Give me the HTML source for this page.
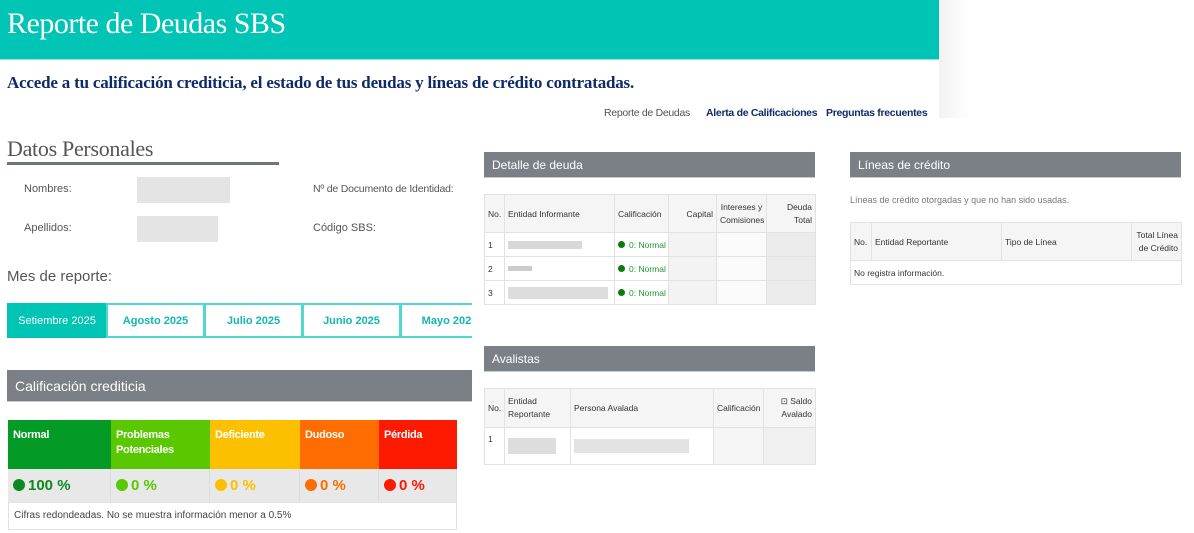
<!DOCTYPE html>
<html><head><meta charset="utf-8"><style>
*{margin:0;padding:0;box-sizing:border-box}
body{width:1194px;height:533px;background:#fff;position:relative;overflow:hidden;font-family:"Liberation Sans",sans-serif;}
.a{position:absolute}
.serif{font-family:"Liberation Serif",serif}
.bar{background:#7b8087;color:#fff;font-size:12px;padding-left:8px;display:flex;align-items:center;border-bottom:1px solid #c8cacc}
table{border-collapse:collapse;position:absolute;font-size:8.5px;color:#333;table-layout:fixed}
td,th{border:1px solid #e2e2e2;font-weight:normal;padding:0 3px;vertical-align:middle;white-space:nowrap;overflow:hidden}
th{background:#f5f5f5}
th.w{white-space:normal;line-height:13px}
.ok{color:#1a9a2a}
.dot{display:inline-block;width:7px;height:7px;border-radius:50%;background:#0c7a0c;margin-right:4px;vertical-align:-0.5px}
.tab{position:absolute;top:0;height:35px;border:2px solid #4fd8d0;color:#13b7ae;font-weight:bold;font-size:11px;display:flex;align-items:center;justify-content:center}
.cc{position:absolute;top:420px;height:49px;color:#fff;font-weight:bold;font-size:11px;padding:8px 5px;line-height:15px;letter-spacing:-0.3px}
.pc{position:absolute;top:469px;height:33px;background:#e8e8e8;font-size:15px;font-weight:bold;padding:8px 5px;border-right:1px solid #ddd}
.pc i{display:inline-block;width:12px;height:12px;border-radius:50%;margin-right:3px;vertical-align:-1px}
</style></head><body>
<div class="a" style="left:0;top:0;width:939px;height:60px;background:#00c4b4;border-bottom:1px solid #8ee6de"></div>
<div class="a serif" style="left:7px;top:7px;font-size:30px;color:#fff;letter-spacing:-0.5px">Reporte de Deudas SBS</div>
<div class="a" style="left:939px;top:0;width:30px;height:118px;background:linear-gradient(90deg,#f2f2f2,#fff)"></div>
<div class="a serif" style="left:7px;top:73px;font-size:17px;font-weight:bold;color:#0f2a6b;letter-spacing:-0.2px">Accede a tu calificación crediticia, el estado de tus deudas y líneas de crédito contratadas.</div>
<div class="a" style="left:0;top:106px;width:939px;height:12px;overflow:hidden;font-size:10.5px;white-space:nowrap;letter-spacing:-0.3px">
<span class="a" style="left:604px;top:1px;color:#555">Reporte de Deudas</span>
<span class="a" style="left:706px;top:1px;color:#0f2a6b;font-weight:bold">Alerta de Calificaciones</span>
<span class="a" style="left:826px;top:1px;color:#0f2a6b;font-weight:bold">Preguntas frecuentes</span></div>

<div class="a serif" style="left:7px;top:136px;font-size:22px;color:#555;letter-spacing:-0.3px">Datos Personales</div>
<div class="a" style="left:7px;top:162px;width:272px;height:3px;background:#6e747b"></div>
<div class="a" style="left:24px;top:183px;font-size:11px;color:#555">Nombres:</div>
<div class="a" style="left:24px;top:222px;font-size:11px;color:#555">Apellidos:</div>
<div class="a" style="left:313px;top:183px;font-size:10.5px;color:#555;letter-spacing:-0.2px">Nº de Documento de Identidad:</div>
<div class="a" style="left:313px;top:222px;font-size:11px;color:#555">Código SBS:</div>
<div class="a" style="left:137px;top:177px;width:93px;height:26px;background:#e4e4e4"></div>
<div class="a" style="left:137px;top:216px;width:81px;height:26px;background:#e4e4e4"></div>
<div class="a" style="left:7px;top:268px;font-size:15px;color:#555">Mes de reporte:</div>
<div class="a" style="left:7px;top:303px;width:465px;height:36px;overflow:hidden">
<div class="tab" style="left:0;width:100px;background:#00c4b4;color:#fff;font-weight:normal;border-color:#00c4b4">Setiembre 2025</div>
<div class="tab" style="left:99px;width:99px">Agosto 2025</div>
<div class="tab" style="left:197px;width:99px">Julio 2025</div>
<div class="tab" style="left:295px;width:99px">Junio 2025</div>
<div class="tab" style="left:393px;width:99px">Mayo 2025</div></div>
<div class="a bar" style="left:7px;top:370px;width:465px;height:32px;font-size:14px">Calificación crediticia</div>
<div class="cc" style="left:8px;width:103px;background:#039b26">Normal</div>
<div class="cc" style="left:111px;width:99px;background:#5ac800">Problemas Potenciales</div>
<div class="cc" style="left:210px;width:90px;background:#fdc000">Deficiente</div>
<div class="cc" style="left:300px;width:79px;background:#ff6c00">Dudoso</div>
<div class="cc" style="left:379px;width:78px;background:#fc1a00">Pérdida</div>
<div class="pc" style="left:8px;width:103px;color:#0c8a22"><i style="background:#0c8a22"></i>100 %</div>
<div class="pc" style="left:111px;width:99px;color:#5ac800"><i style="background:#5ac800"></i>0 %</div>
<div class="pc" style="left:210px;width:90px;color:#fdc000"><i style="background:#fdc000"></i>0 %</div>
<div class="pc" style="left:300px;width:79px;color:#ff6c00"><i style="background:#ff6c00"></i>0 %</div>
<div class="pc" style="left:379px;width:78px;color:#fc1a00"><i style="background:#fc1a00"></i>0 %</div>
<div class="a" style="left:8px;top:502px;width:449px;height:28px;border:1px solid #e2e2e2;font-size:10px;color:#444;padding:7px 5px">Cifras redondeadas. No se muestra información menor a 0.5%</div>

<div class="a bar" style="left:484px;top:152px;width:331px;height:26px">Detalle de deuda</div>
<table style="left:484px;top:194px;width:331px">
<colgroup><col style="width:20px"><col style="width:110px"><col style="width:54px"><col style="width:48px"><col style="width:50px"><col style="width:49px"></colgroup>
<tr style="height:38px"><th style="text-align:left">No.</th><th style="text-align:left">Entidad Informante</th><th style="text-align:left">Calificación</th><th style="text-align:right">Capital</th><th class="w" style="text-align:center">Intereses y Comisiones</th><th class="w" style="text-align:right">Deuda Total</th></tr>
<tr style="height:24px"><td>1</td><td><div style="width:74px;height:8px;background:#d8d8d8"></div></td><td class="ok"><span class="dot"></span>0: Normal</td><td style="background:#f3f3f3"></td><td style="background:#fafafa"></td><td style="background:#ebebeb"></td></tr>
<tr style="height:24px"><td>2</td><td><div style="width:24px;height:5px;background:#ccc"></div></td><td class="ok"><span class="dot"></span>0: Normal</td><td style="background:#f3f3f3"></td><td style="background:#fafafa"></td><td style="background:#ebebeb"></td></tr>
<tr style="height:24px"><td>3</td><td><div style="width:100px;height:12px;background:#ddd"></div></td><td class="ok"><span class="dot"></span>0: Normal</td><td style="background:#f3f3f3"></td><td style="background:#fafafa"></td><td style="background:#ebebeb"></td></tr>
</table>
<div class="a bar" style="left:484px;top:346px;width:331px;height:26px">Avalistas</div>
<table style="left:484px;top:388px;width:331px">
<colgroup><col style="width:20px"><col style="width:66px"><col style="width:143px"><col style="width:50px"><col style="width:52px"></colgroup>
<tr style="height:39px"><th style="text-align:left">No.</th><th class="w" style="text-align:left">Entidad Reportante</th><th style="text-align:left">Persona Avalada</th><th>Calificación</th><th class="w" style="text-align:right">⊡ Saldo Avalado</th></tr>
<tr style="height:37px"><td style="vertical-align:top;padding-top:6px">1</td><td><div style="width:48px;height:16px;background:#ddd"></div></td><td><div style="width:115px;height:14px;background:#e3e3e3"></div></td><td style="background:#f6f6f6"></td><td style="background:#f0f0f0"></td></tr>
</table>

<div class="a bar" style="left:850px;top:152px;width:331px;height:26px">Líneas de crédito</div>
<div class="a" style="left:850px;top:195px;font-size:9px;color:#777">Líneas de crédito otorgadas y que no han sido usadas.</div>
<table style="left:850px;top:222px;width:331px">
<colgroup><col style="width:21px"><col style="width:130px"><col style="width:130px"><col style="width:50px"></colgroup>
<tr style="height:38px"><th style="text-align:left">No.</th><th style="text-align:left">Entidad Reportante</th><th style="text-align:left">Tipo de Línea</th><th class="w" style="text-align:right">Total Línea de Crédito</th></tr>
<tr style="height:24px"><td colspan="4">No registra información.</td></tr>
</table>
</body></html>
